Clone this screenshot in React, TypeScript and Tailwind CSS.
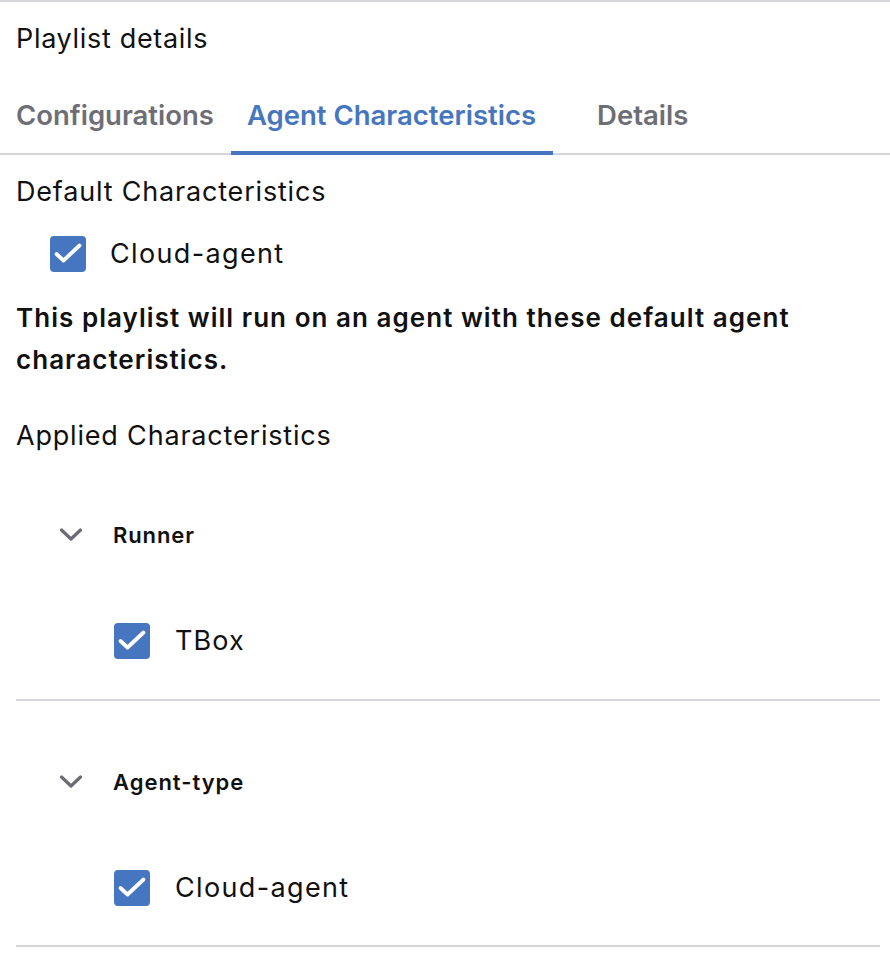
import React, { useState } from 'react';

const font = { fontFamily: 'Inter, "Noto Sans", sans-serif' };

const CheckBox: React.FC<{ checked: boolean; onToggle: () => void }> = ({ checked, onToggle }) => (
    <button
        onClick={onToggle}
        className={`flex h-9 w-9 shrink-0 items-center justify-center rounded-[4px] ${checked ? 'bg-[#4676bf]' : 'border-2 border-[#9ca3af] bg-white'}`}
    >
        {checked && (
            <svg width="36" height="36" viewBox="0 0 36 36" fill="none">
                <path d="M6.5 18l7 6.5L29.5 9.5" stroke="white" strokeWidth="3.8" strokeLinecap="round" strokeLinejoin="round" />
            </svg>
        )}
    </button>
);

const Chevron = () => (
    <svg width="24" height="16" viewBox="0 0 24 16" fill="none" className="shrink-0">
        <path d="M2.5 3l9.5 9 9.5-9" stroke="#6b6b73" strokeWidth="3.2" strokeLinecap="round" strokeLinejoin="round" />
    </svg>
);

const App: React.FC = () => {
    const [tab, setTab] = useState('agent');
    const [checks, setChecks] = useState({ def: true, tbox: true, cloud: true });
    const toggle = (k: keyof typeof checks) => setChecks((c) => ({ ...c, [k]: !c[k] }));

    const tabs = [
        { id: 'config', name: 'Configurations', cls: 'pl-4 pr-[17px]' },
        { id: 'agent', name: 'Agent Characteristics', cls: 'pl-4 pr-[17px]' },
        { id: 'details', name: 'Details', cls: 'pl-11 pr-4' }
    ];

    return (
        <div style={font} className="min-h-[970px] w-[890px] bg-white text-[#111]">
            <div className="h-[2px] bg-[#d6d6da]" />
            <div className="px-4 pt-[21px] text-[27px] leading-[32px] tracking-[0.025em]">Playlist details</div>

            <div className="mt-[43px] flex border-b-2 border-[#d6d6da]">
                {tabs.map((t) => (
                    <button
                        key={t.id}
                        onClick={() => setTab(t.id)}
                        className={`relative pb-[21px] text-[27.5px] font-semibold leading-[34px] ${t.cls} ${tab === t.id ? 'text-[#4676bf]' : 'text-[#6e6e76]'}`}
                    >
                        {t.name}
                        {tab === t.id && <span className="absolute -bottom-[2px] left-0 right-0 h-[4px] bg-[#4676bf]" />}
                    </button>
                ))}
            </div>

            <div className="pl-4 pr-[10px]">
                <div className="pt-[21px] text-[27px] leading-[32px] tracking-[0.03em]">Default Characteristics</div>
                <div className="mt-[28px] flex items-center gap-[24px] pl-[34px]">
                    <CheckBox checked={checks.def} onToggle={() => toggle('def')} />
                    <span className="text-[27px] leading-[36px] tracking-[0.05em]">Cloud-agent</span>
                </div>
                <p className="mt-[25px] text-[26px] font-semibold leading-[42px] tracking-[0.04em]">
                    This playlist will run on an agent with these default agent characteristics.
                </p>
                <div className="mt-[39px] text-[27px] leading-[32px] tracking-[0.03em]">Applied Characteristics</div>

                <div className="mt-[68px] flex items-center gap-[30px] pl-[43px]">
                    <Chevron />
                    <span className="text-[22px] font-semibold leading-[30px] tracking-[0.04em]">Runner</span>
                </div>
                <div className="mt-[73px] flex items-center gap-[25px] pl-[98px]">
                    <CheckBox checked={checks.tbox} onToggle={() => toggle('tbox')} />
                    <span className="text-[27px] leading-[36px] tracking-[0.04em]">TBox</span>
                </div>
                <div className="mt-[40px] h-[2px] bg-[#d6d6da]" />

                <div className="mt-[66px] flex items-center gap-[30px] pl-[43px]">
                    <Chevron />
                    <span className="text-[22px] font-semibold leading-[30px] tracking-[0.045em]">Agent-type</span>
                </div>
                <div className="mt-[73px] flex items-center gap-[25px] pl-[98px]">
                    <CheckBox checked={checks.cloud} onToggle={() => toggle('cloud')} />
                    <span className="text-[27px] leading-[36px] tracking-[0.05em]">Cloud-agent</span>
                </div>
                <div className="mt-[39px] h-[2px] bg-[#d6d6da]" />
            </div>
        </div>
    );
};

export default App;
